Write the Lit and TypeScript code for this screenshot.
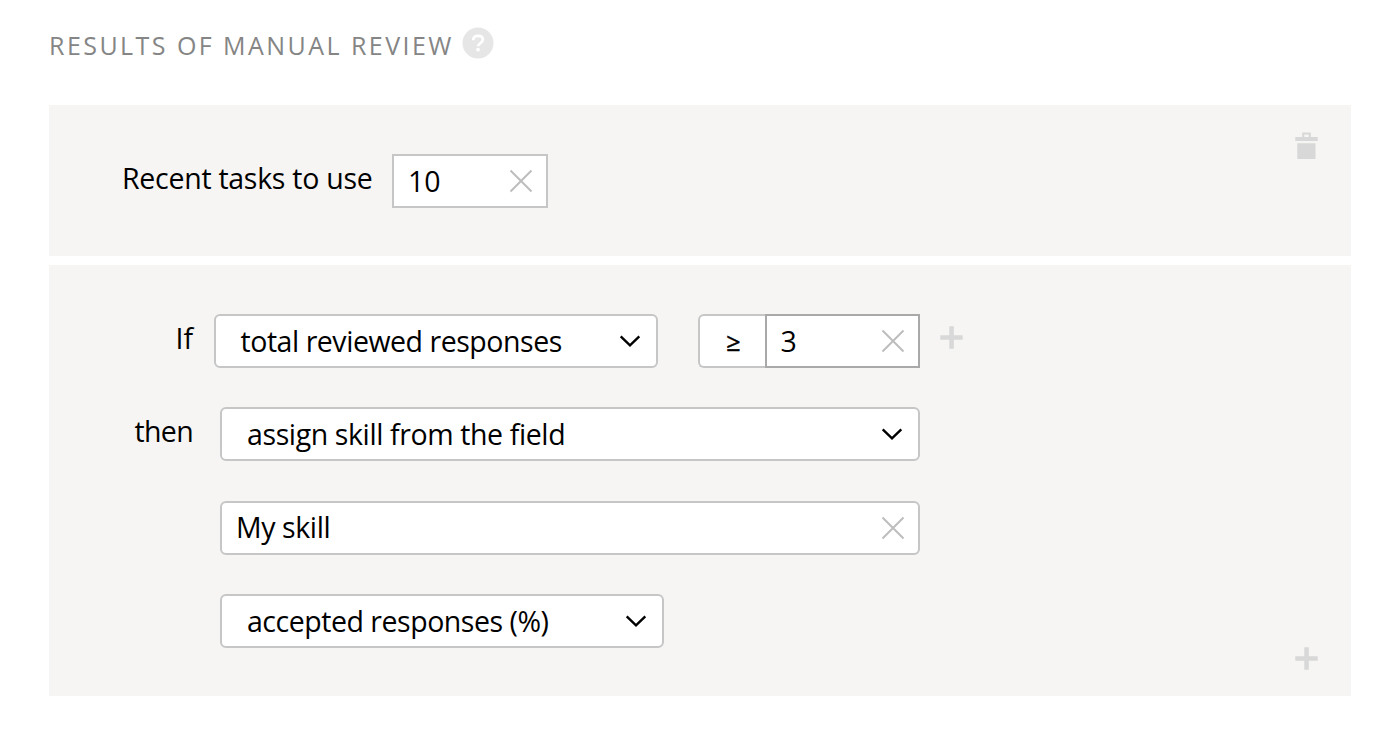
import { LitElement, html, css, svg } from "lit";
import { customElement } from "lit/decorators.js";

const cross = html`<svg class="cross" viewBox="0 0 24 24">${svg`<path d="M1.5 1.5 22.5 22.5M22.5 1.5 1.5 22.5" fill="none" stroke="#bdbdbd" stroke-width="2"/>`}</svg>`;
const chevron = html`<svg class="chevron" viewBox="0 0 22 14">${svg`<path d="M1.7 2.3 11 11.3 20.3 2.3" fill="none" stroke="#000" stroke-width="2.4"/>`}</svg>`;
const plus = html`<svg class="plus" viewBox="0 0 23 23">${svg`<path d="M9.3 .3h4.5v9h8.9v4.5h-8.9v8.9H9.3v-8.9H.3V9.3h9z" fill="#d8d8d8"/>`}</svg>`;
const trash = html`<svg class="trash" viewBox="0 0 23 28">${svg`<path fill-rule="evenodd" d="M7.2 .4h8.6V5h6.9v4H.3V5h6.9zM9.3 2.4V5h4.4V2.4zM2.3 11.2h18.2v15.9H2.3z" fill="#d8d8d8"/>`}</svg>`;

@customElement("app-root")
export class AppRoot extends LitElement {
  static styles = css`
    :host {
      display: block;
      box-sizing: border-box;
      width: 1400px;
      height: 742px;
      padding: 0 49px;
      background: #fff;
      color: #000;
      font: 28.5px/40px "Open Sans", "Noto Sans", sans-serif;
      white-space: nowrap;
      overflow: hidden;
    }
    svg { display: block; flex: none; }
    header { display: flex; height: 105px; color: #858585; }
    h2 {
      margin: 25px 0 0;
      width: 413px;
      font-size: 25px;
      font-weight: 400;
      line-height: 40px;
      letter-spacing: 2.45px;
    }
    .help { width: 32px; height: 32px; margin-top: 27px; }
    .panel {
      display: flex;
      justify-content: space-between;
      box-sizing: border-box;
      background: #f6f5f3;
      padding-right: 33px;
    }
    .first { height: 151px; padding-top: 49px; padding-left: 73px; margin-bottom: 9px; }
    .second { height: 431px; padding-top: 49px; }
    .line { display: flex; height: 54px; }
    .rows { display: flex; flex-direction: column; gap: 39.4px; }
    .label { line-height: 49px; }
    .recent { width: 270px; }
    .side { width: 144px; text-align: right; }
    .box {
      display: flex;
      align-items: center;
      justify-content: space-between;
      box-sizing: border-box;
      height: 54px;
      border: 2px solid #c6c6c6;
      border-radius: 6px;
      background: #fff;
      padding: 0 13px 0 14px;
    }
    .box span { padding-bottom: 1px; }
    .short { width: 156px; border-radius: 0; }
    .select { padding: 0 15px 0 25px; width: 444px; }
    .wide { width: 700px; }
    .gap-if { margin-left: 20.5px; }
    .gap { margin-left: 27px; }
    .op {
      width: 69px;
      margin-left: 40px;
      border-radius: 6px 0 0 6px;
      justify-content: center;
      font-size: 25px;
      -webkit-text-stroke: 0.5px #000;
      border-right: 0;
    }
    .active { width: 155px; border-color: #a9a9a9; margin-left: -2px; }
    .cross { width: 24px; height: 24px; }
    .chevron { width: 22px; height: 14px; }
    .plus { width: 23px; height: 23px; }
    .add { margin: 12px 0 0 20px; }
    .trash { width: 23px; height: 28px; margin-top: -22px; }
    .bottom { margin-top: 333px; }
    .t1 { letter-spacing: -0.27px; }
    .t2 { letter-spacing: -0.46px; }
    .t3 { letter-spacing: -0.65px; }
    .t4 { letter-spacing: -0.39px; }
    .t5 { letter-spacing: -0.4px; }
    .t6 { letter-spacing: -0.47px; }
  `;

  render() {
    return html`
      <header>
        <h2>RESULTS OF MANUAL REVIEW</h2>
        <svg class="help" viewBox="0 0 32 32">
          <circle cx="16" cy="16" r="15.5" fill="#e6e6e6" />
          <path d="M11.2 13.2C11.2 10.4 13.2 8.8 16.1 8.8c2.8 0 4.8 1.5 4.8 3.8 0 3.5-4.7 3.3-4.7 6.6" fill="none" stroke="#fff" stroke-width="2.7" />
          <circle cx="16" cy="22.7" r="1.9" fill="#fff" />
        </svg>
      </header>
      <section class="panel first">
        <div class="line">
          <div class="label recent"><span class="t1">Recent tasks to use</span></div>
          <div class="box short"><span class="num">10</span>${cross}</div>
        </div>
        ${trash}
      </section>
      <section class="panel second">
        <div class="rows">
          <div class="line">
            <div class="label side">If</div>
            <div class="box select gap-if"><span class="t2">total reviewed responses</span>${chevron}</div>
            <div class="box op">≥</div>
            <div class="box short active"><span class="num">3</span>${cross}</div>
            <div class="add">${plus}</div>
          </div>
          <div class="line">
            <div class="label side"><span class="t3">then</span></div>
            <div class="box select wide gap"><span class="t4">assign skill from the field</span>${chevron}</div>
          </div>
          <div class="line">
            <div class="side"></div>
            <div class="box wide gap"><span class="t5">My skill</span>${cross}</div>
          </div>
          <div class="line">
            <div class="side"></div>
            <div class="box select gap"><span class="t6">accepted responses (%)</span>${chevron}</div>
          </div>
        </div>
        <div class="bottom">${plus}</div>
      </section>
    `;
  }
}
